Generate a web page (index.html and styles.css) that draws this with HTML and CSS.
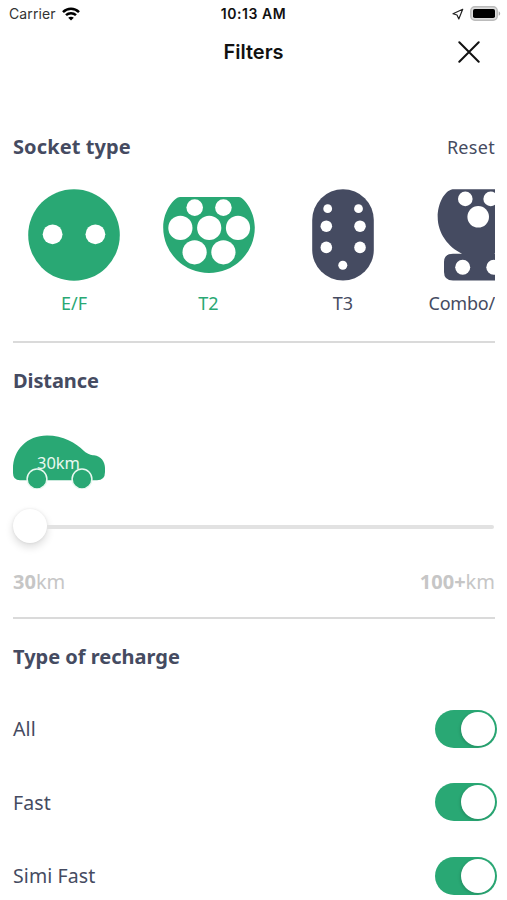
FILE: index.html
```html
<!DOCTYPE html>
<html lang="en">
<head>
    <meta charset="UTF-8">
    <meta name="viewport" content="width=device-width, initial-scale=1.0">
    <link rel="stylesheet" href="styles.css">
    <title>Filters</title>
</head>
<body>
    <div class="status-bar">
        <div class="carrier">
            <span class="carrier-name">Carrier</span>
            <svg width="18" height="14" viewBox="0 0 18 14" fill="none" stroke="#000" stroke-width="2.5">
                <path d="M1 5.1C5.5.6 12.5.6 17 5.1"/>
                <path d="M4 8.2c2.8-2.7 7.2-2.7 10 0"/>
                <path d="M9 13.6L6.2 10.8c1.6-1.5 4-1.5 5.6 0z" fill="#000" stroke="none"/>
            </svg>
        </div>
        <span class="time">10:13 AM</span>
        <div class="status-icons">
            <svg width="12" height="12" viewBox="0 0 12 12" fill="none" stroke="#222" stroke-width="1.2" stroke-linejoin="round">
                <path d="M10.7 1.3L1 5.7l4 1.300 1.800 4z"/>
            </svg>
            <svg width="31" height="15" viewBox="0 0 31 15">
                <rect x=".8" y=".8" width="26.4" height="13.4" rx="4" fill="#ddd" stroke="#bbb" stroke-width="1.5"/>
                <rect x="3" y="3" width="22" height="9" rx="1.8" fill="#000"/>
                <path d="M28.7 5.2c2 .9 2 3.7 0 4.6z" fill="#aaa"/>
            </svg>
        </div>
    </div>

    <header class="header">
        <h1>Filters</h1>
        <button type="button" class="close" aria-label="Close">
            <svg width="22" height="22" viewBox="0 0 22 22" stroke="#111" stroke-width="2" stroke-linecap="round">
                <path d="M1.3 1.3l19.4 19.4M20.7 1.3L1.3 20.7"/>
            </svg>
        </button>
    </header>

    <main class="filters">
        <section class="sockets">
            <div class="section-head">
                <h2 class="socket-title">Socket type</h2>
                <a class="reset">Reset</a>
            </div>
            <div class="socket-list">
                <div class="socket selected">
                    <svg width="92" height="92" viewBox="0 0 92 92">
                        <circle cx="46" cy="46" r="45.8"/>
                        <g fill="#fff">
                            <circle cx="24.6" cy="45.3" r="9.9"/>
                            <circle cx="67.4" cy="45.3" r="9.9"/>
                        </g>
                    </svg>
                    <span>E/F</span>
                </div>
                <div class="socket selected">
                    <svg width="92" height="92" viewBox="0 0 92 92">
                        <path d="M17 8H76C80 8 91.8 21 91.8 38.5A45.8 45.5 0 0 1 .2 38.5C.2 21 12 8 17 8Z"/>
                        <g fill="#fff">
                            <circle cx="31.7" cy="18.6" r="8.3"/>
                            <circle cx="60.4" cy="18.6" r="8.3"/>
                            <circle cx="17.4" cy="38.9" r="12.1"/>
                            <circle cx="46.2" cy="38.9" r="12.1"/>
                            <circle cx="75" cy="38.9" r="12.1"/>
                            <circle cx="31.6" cy="63.3" r="12.1"/>
                            <circle cx="60.4" cy="63.3" r="12.1"/>
                        </g>
                    </svg>
                    <span>T2</span>
                </div>
                <div class="socket">
                    <svg width="92" height="92" viewBox="0 0 92 92">
                        <rect x="15.2" y=".2" width="61.6" height="91.4" rx="30.8"/>
                        <g fill="#fff">
                            <circle cx="30.7" cy="19.7" r="4.4"/>
                            <circle cx="61.5" cy="19.7" r="4.4"/>
                            <circle cx="29.3" cy="37.2" r="5.8"/>
                            <circle cx="63" cy="37.2" r="5.8"/>
                            <circle cx="29.3" cy="58.4" r="5.8"/>
                            <circle cx="63" cy="58.4" r="5.8"/>
                            <circle cx="45.8" cy="76.2" r="4.5"/>
                        </g>
                    </svg>
                    <span>T3</span>
                </div>
                <div class="socket">
                    <svg width="92" height="92" viewBox="0 0 92 92">
                        <path d="M20.5.2H71.5C80 2 86.3 15 86.3 28C86.3 44 76 58 62 64.7H72Q80 64.7 80 73V83Q80 91.5 72 91.5H21Q12 91.5 12 83V73Q12 64.7 21 64.7H30C16 58 5.7 44 5.7 28C5.7 15 12 2 20.500.2Z"/>
                        <g fill="#fff">
                            <circle cx="33.3" cy="9.9" r="7.3"/>
                            <circle cx="58.7" cy="9.9" r="7.3"/>
                            <circle cx="46.2" cy="27.8" r="10.8"/>
                            <circle cx="30.7" cy="78.3" r="7.5"/>
                            <circle cx="61.8" cy="78.3" r="7.5"/>
                        </g>
                    </svg>
                    <span class="combo">Combo/</span>
                </div>
            </div>
        </section>

        <section class="distance">
            <h2 class="distance-title">Distance</h2>
            <svg class="car" width="92" height="54" viewBox="0 0 92 54">
                <path d="M7 45.3Q0 45.3 0 38V34C0 15 14 .5 34 .5C50 .5 63 8 71 16C75 19.5 78 20 81 20.3C88 21 92 27 92 33V37Q92 45.3 84 45.3Z" fill="#29a874"/>
                <text class="car-label" x="24" y="33.5" textLength="43" lengthAdjust="spacingAndGlyphs">30km</text>
                <g fill="#29a874" stroke="#e9f8f0" stroke-width="1.5">
                    <circle cx="24" cy="44" r="9.9"/>
                    <circle cx="69" cy="44" r="9.9"/>
                </g>
            </svg>
            <div class="slider">
                <div class="thumb"></div>
                <div class="track"></div>
            </div>
            <div class="range">
                <span class="min"><b>30</b>km</span>
                <span class="max"><b>100+</b>km</span>
            </div>
        </section>

        <section class="recharge">
            <h2 class="recharge-title">Type of recharge</h2>
            <div class="option">
                <span class="all">All</span>
                <div class="toggle"><div class="knob"></div></div>
            </div>
            <div class="option">
                <span class="fast">Fast</span>
                <div class="toggle"><div class="knob"></div></div>
            </div>
            <div class="option">
                <span class="simi">Simi Fast</span>
                <div class="toggle"><div class="knob"></div></div>
            </div>
        </section>
    </main>
</body>
</html>
```

FILE: styles.css
```css
* {
    box-sizing: border-box;
}

body {
    margin: 0;
    height: 900px;
    overflow: hidden;
    background: #fff;
    color: #454b61;
    font-family: "Noto Sans", "Open Sans", sans-serif;
    font-size: 19px;
}

h1, h2 {
    margin: 0;
}

/* Status bar */
.status-bar {
    display: grid;
    grid-template-columns: 1fr auto 1fr;
    align-items: center;
    height: 27px;
    padding: 0 6px 0 9px;
    font-family: Inter, sans-serif;
    font-size: 14px;
    color: #111;
}

.carrier {
    display: flex;
    align-items: center;
    gap: 6px;
}

.carrier-name {
    color: #333;
    letter-spacing: 0.1px;
}

.time {
    margin-right: 3px;
    font-weight: 600;
    letter-spacing: 0.55px;
}

.status-icons {
    display: flex;
    align-items: center;
    justify-content: flex-end;
    gap: 6px;
}

/* Header */
.header {
    display: grid;
    grid-template-columns: 1fr auto 1fr;
    align-items: center;
    height: 50px;
    padding: 0 27px;
}

.header h1 {
    grid-column: 2;
    font-family: Inter, sans-serif;
    font-size: 20px;
    font-weight: 600;
    color: #111;
}

.close {
    display: flex;
    justify-self: end;
    padding: 0;
    border: none;
    background: none;
}

.filters {
    padding: 0 12px 0 13px;
}

h2 {
    font-size: 20px;
    font-weight: 700;
    line-height: 28px;
}

.socket-title {
    letter-spacing: 0.1px;
}

/* Socket type */
.sockets {
    height: 266px;
    padding-top: 56px;
    border-bottom: 2px solid #dadada;
}

.section-head {
    display: flex;
    align-items: center;
    justify-content: space-between;
    height: 28px;
}

.reset {
    font-size: 18px;
    letter-spacing: 0.3px;
}

.socket-list {
    display: flex;
    gap: 12.5px;
    margin-top: 28px;
    overflow: hidden;
}

.socket {
    display: flex;
    flex: 0 0 122px;
    flex-direction: column;
    align-items: center;
    fill: #454b61;
    font-size: 18px;
}

.socket span {
    margin-top: 9px;
    line-height: 26px;
}

.socket .combo {
    align-self: flex-start;
    padding-left: 12px;
    letter-spacing: -0.2px;
}

.selected {
    color: #29a874;
    fill: #29a874;
}

/* Distance */
.distance {
    height: 276px;
    padding-top: 24px;
    border-bottom: 2px solid #dadada;
}

.distance-title {
    letter-spacing: -0.1px;
}

.car {
    display: block;
    margin-top: 40px;
}

.car-label {
    fill: #e9f8f0;
    font-size: 17px;
}

.slider {
    display: flex;
    align-items: center;
    height: 34px;
    margin-top: 20px;
}

.thumb {
    width: 34px;
    height: 34px;
    border-radius: 50%;
    background: #fff;
    box-shadow: 0 4px 8px rgba(0, 0, 0, 0.14), 0 0 3px rgba(0, 0, 0, 0.08);
}

.track {
    flex: 1;
    height: 4px;
    margin: 2px 1px 0 0;
    border-radius: 0 2px 2px 0;
    background: #e2e2e2;
}

.range {
    display: flex;
    justify-content: space-between;
    margin-top: 26px;
    font-size: 20px;
    line-height: 26px;
    color: #c6c6c6;
}

/* Type of recharge */
.recharge {
    padding-top: 24px;
}

.recharge-title {
    margin-bottom: 21px;
}

.option {
    display: flex;
    align-items: center;
    justify-content: space-between;
    height: 73.5px;
    margin-right: -2px;
    font-size: 19.5px;
    letter-spacing: 0.1px;
}

.toggle {
    display: flex;
    justify-content: flex-end;
    width: 62px;
    height: 38px;
    padding: 2px;
    border-radius: 19px;
    background: #29a874;
}

.knob {
    width: 34px;
    height: 34px;
    border-radius: 50%;
    background: #fff;
    box-shadow: -1px 1px 3px rgba(0, 0, 0, 0.15);
}
```
